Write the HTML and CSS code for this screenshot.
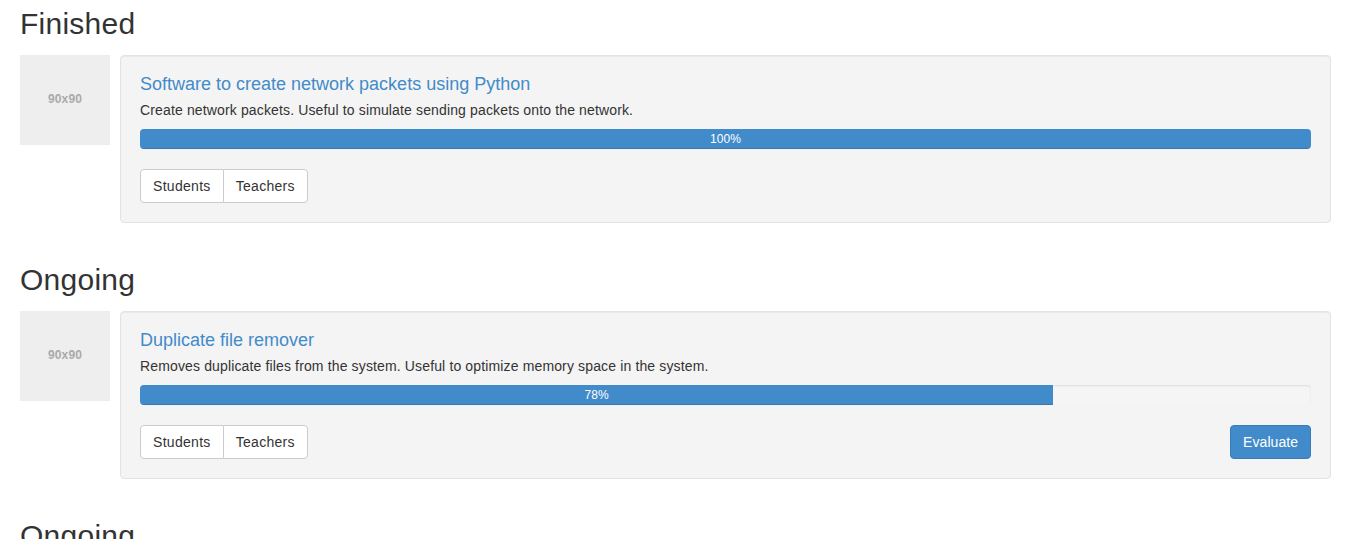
FILE: index.html
```html
<!DOCTYPE html>
<html>
<head>
<meta charset="utf-8">
<link rel="stylesheet" href="styles.css">
</head>
<body>
<div class="container">
  <section class="group">
    <h2 class="group-title">Finished</h2>
    <div class="media">
      <div class="thumb">90x90</div>
      <div class="card">
        <h4 class="card-title">Software to create network packets using Python</h4>
        <p class="card-text">Create network packets. Useful to simulate sending packets onto the network.</p>
        <div class="progress"><div class="progress-bar" style="width:100%">100%</div></div>
        <div class="card-actions">
          <div class="btn-group">
            <button class="btn btn-default">Students</button>
            <button class="btn btn-default">Teachers</button>
          </div>
        </div>
      </div>
    </div>
  </section>
  <section class="group">
    <h2 class="group-title">Ongoing</h2>
    <div class="media">
      <div class="thumb">90x90</div>
      <div class="card">
        <h4 class="card-title">Duplicate file remover</h4>
        <p class="card-text">Removes duplicate files from the system. Useful to optimize memory space in the system.</p>
        <div class="progress"><div class="progress-bar" style="width:78%">78%</div></div>
        <div class="card-actions">
          <div class="btn-group">
            <button class="btn btn-default">Students</button>
            <button class="btn btn-default">Teachers</button>
          </div>
          <button class="btn btn-primary">Evaluate</button>
        </div>
      </div>
    </div>
  </section>
  <section class="group">
    <h2 class="group-title">Ongoing</h2>
  </section>
</div>
</body>
</html>
```
FILE: styles.css
```css
* { box-sizing: border-box; }
html, body { margin: 0; padding: 0; background: #fff; }
body {
  font-family: "Liberation Sans", Arial, sans-serif;
  font-size: 14px;
  line-height: 1.428571;
  color: #333;
  letter-spacing: 0.14px;
}
.container {
  padding: 7px 15px 0 20px;
  display: flex;
  flex-direction: column;
  gap: 40px;
}
.group-title {
  margin: 0 0 15px 0;
  font-size: 30px;
  font-weight: 500;
  line-height: 33px;
  color: #333;
  letter-spacing: 0.25px;
}
.media {
  display: flex;
  align-items: flex-start;
  gap: 10px;
}
.thumb {
  flex: 0 0 90px;
  width: 90px;
  height: 90px;
  background: #eee;
  color: #aaa;
  font-size: 12px;
  font-weight: bold;
  letter-spacing: 0.1px;
  display: flex;
  align-items: center;
  justify-content: center;
}
.card {
  flex: 1;
  min-width: 0;
  padding: 19px;
  background: #f4f4f4;
  border: 1px solid #e3e3e3;
  border-radius: 4px;
  box-shadow: inset 0 1px 1px rgba(0,0,0,0.05);
}
.card-title {
  margin: 0 0 6px 0;
  font-size: 18px;
  font-weight: 500;
  line-height: 19.8px;
  color: #428bca;
  letter-spacing: 0;
}
.card-text {
  margin: 0 0 8px 0;
}
.progress {
  height: 20px;
  margin-bottom: 20px;
  background: #f5f5f5;
  border-radius: 4px;
  overflow: hidden;
  box-shadow: inset 0 1px 2px rgba(0,0,0,0.1);
}
.progress-bar {
  height: 100%;
  background: #428bca;
  color: #fff;
  font-size: 12px;
  line-height: 20px;
  text-align: center;
  letter-spacing: 0.1px;
  box-shadow: inset 0 -1px 0 rgba(0,0,0,0.15);
}
.card-actions {
  display: flex;
  justify-content: space-between;
  align-items: center;
}
.btn-group { display: flex; }
.btn {
  font-family: inherit;
  font-size: 14px;
  line-height: 20px;
  letter-spacing: 0.3px;
  padding: 6px 12px;
  border: 1px solid transparent;
  border-radius: 4px;
  cursor: pointer;
  margin: 0;
}
.btn-default {
  background: #fff;
  color: #333;
  border-color: #ccc;
}
.btn-group .btn:first-child {
  border-top-right-radius: 0;
  border-bottom-right-radius: 0;
}
.btn-group .btn + .btn {
  margin-left: -1px;
  border-top-left-radius: 0;
  border-bottom-left-radius: 0;
}
.btn-primary {
  background: #428bca;
  color: #fff;
  border-color: #357ebd;
  letter-spacing: 0.05px;
}
```
